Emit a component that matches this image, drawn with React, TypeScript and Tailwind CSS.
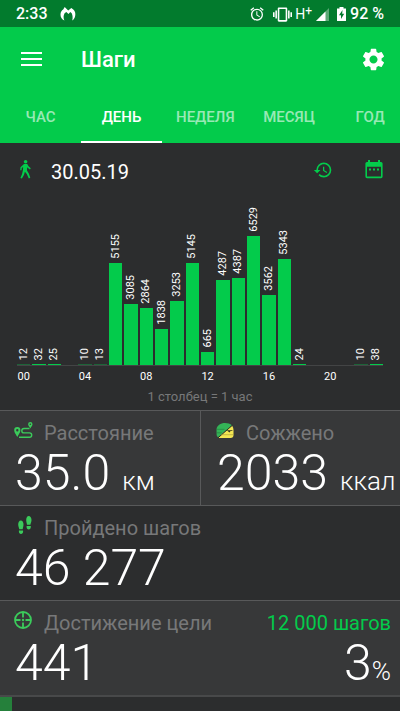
import type { ReactNode } from 'react';
import { MdAccessAlarm, MdHistory, MdSettings, MdVibration } from 'react-icons/md';

const TABS = ['ЧАС', 'ДЕНЬ', 'НЕДЕЛЯ', 'МЕСЯЦ', 'ГОД'];
const ACTIVE_TAB = 'ДЕНЬ';

const STEPS_PER_HOUR = [
  12, 32, 25, 0, 10, 13, 5155, 3085, 2864, 1838, 3253, 5145,
  665, 4287, 4387, 6529, 3562, 5343, 24, 0, 0, 0, 10, 38,
];
const STEPS_PER_PIXEL = 50.6;

function StatusBar() {
  return (
    <div className="flex h-[27px] items-center bg-[#027b2d] px-4 pt-px text-base font-medium">
      <span>2:33</span>
      <svg viewBox="0 0 16 14" className="ml-3 h-[14px] w-4 fill-white" aria-hidden="true">
        <path d="M4.700 0 8.200 3.600 11.300 1 13.300 2.400C15 4 15.700 6.200 15.200 8.700 14.900 10.600 13.800 12.500 12.200 13.600 12.900 11 12.700 8.600 11.700 6.200L10.300 5 8.500 6.900 6.300 5 4.600 6.200C3.300 8.600 3.300 11 4.400 13.600 1.800 12.200.3 10 .5 7.200.6 5.100 1.600 3.600 3.200 2.600Z" />
      </svg>
      <div className="ml-auto flex items-center">
        <MdAccessAlarm className="size-4" />
        <MdVibration className="ml-2 size-[19px]" />
        <span className="ml-[3px] text-sm leading-none font-normal">
          H<sup className="-top-1 text-[12px]">+</sup>
        </span>
        <svg viewBox="0 0 13 13" className="ml-1 size-[13px]" aria-hidden="true">
          <path d="M13 0V13H0Z" fill="#fff" fillOpacity=".35" />
          <path d="M9.5 3.5V13H0Z" fill="#fff" />
        </svg>
        <svg viewBox="0 0 9 14" className="ml-2 h-[14px] w-[9px]" aria-hidden="true">
          <path d="M2.500 0h4v1.500H9V14H0V1.500h2.500Z" fill="#fff" />
          <path d="M5.500 3 2 8.300h2v3.800L7.200 6.800h-2Z" fill="#027b2d" />
        </svg>
        <span className="ml-1">92 %</span>
      </div>
    </div>
  );
}

function Header() {
  return (
    <header className="bg-[#03cb4b]">
      <div className="flex h-16 items-center px-4">
        <button type="button" aria-label="Меню" className="flex w-[30px] justify-center">
          <svg viewBox="0 0 21 14" className="h-[14px] w-[21px] fill-white">
            <path d="M0 0h21v2H0zM0 6h21v2H0zM0 12h21v2H0z" />
          </svg>
        </button>
        <h1 className="ml-[35px] text-[22px] font-medium">Шаги</h1>
        <button type="button" aria-label="Настройки" className="ml-auto -mr-[3px]">
          <MdSettings className="size-[27px]" />
        </button>
      </div>
      <nav className="flex h-[52px] overflow-hidden">
        {TABS.map((tab) => (
          <button
            key={tab}
            type="button"
            className={
              tab === ACTIVE_TAB
                ? 'min-w-[81px] shrink-0 border-b-2 border-white px-[14px] pt-0.5 text-[15px] font-medium text-white'
                : 'min-w-[81px] shrink-0 border-b-2 border-transparent px-[14px] pt-0.5 text-[15px] font-medium text-white/60'
            }
          >
            {tab}
          </button>
        ))}
      </nav>
    </header>
  );
}

function DateRow() {
  return (
    <div className="flex h-[57px] items-center px-4 text-[#03cb4b]">
      <svg viewBox="0 0 11 19" className="mb-1 ml-1 h-[19px] w-[11px] fill-current" aria-hidden="true">
        <circle cx="5.600" cy="1.800" r="1.800" />
        <path d="M4 4h3.200l1.400 2.300 2.200 2-.9 1.100-2.300-1.700-.4-.6-.2 3.300 1.800 3.100 1.500 4.300-1.500.7-2-4.400-1.900-2.300-1 3.100-2 3.700-1.500-.7L2 14.200l1-4.400.1-2.800-1.300 1.100-.3 2.100H.2l.3-2.900Z" />
      </svg>
      <span className="ml-5 text-xl text-white">30.05.19</span>
      <button type="button" aria-label="История" className="mb-1 ml-auto">
        <MdHistory className="size-5" />
      </button>
      <button type="button" aria-label="Выбрать дату" className="mr-px mb-1 ml-8">
        <svg viewBox="0 0 18 19" className="h-[19px] w-[18px]">
          <path
            fill="currentColor"
            fillRule="evenodd"
            d="M3 0h2v2h8V0h2v2h1a1.600 1.600 0 0 1 1.600 1.600v13A1.600 1.600 0 0 1 16 18.200H2A1.600 1.600 0 0 1 .4 16.600v-13A1.600 1.600 0 0 1 2 2h1ZM2 6.700v9.800h14V6.700ZM4 8.500h2v2H4zM8 8.500h2v2H8zM12 8.500h2v2h-2z"
          />
        </svg>
      </button>
    </div>
  );
}

function StepsChart() {
  return (
    <figure className="px-[17px]">
      <div className="flex h-[166px] items-end gap-0.5 border-b border-[#434445]">
        {STEPS_PER_HOUR.map((steps, hour) => (
          <div key={hour} className="flex min-w-0 flex-1 flex-col items-center">
            {steps > 0 && (
              <>
                <span className="mb-1 rotate-180 text-[11px] leading-[14px] [writing-mode:vertical-rl]">
                  {steps}
                </span>
                <div
                  className={steps < 20 ? 'w-full bg-[#03cb4b]/35' : 'w-full bg-[#03cb4b]'}
                  style={{ height: Math.max(1, Math.round(steps / STEPS_PER_PIXEL)) }}
                />
              </>
            )}
          </div>
        ))}
      </div>
      <div className="mt-1 flex gap-0.5 text-[11px] leading-[14px]">
        {STEPS_PER_HOUR.map((_, hour) => (
          <span key={hour} className="flex min-w-0 flex-1 justify-center">
            {hour % 4 === 0 && String(hour).padStart(2, '0')}
          </span>
        ))}
      </div>
      <figcaption className="pt-1 pb-1 text-center text-[13px] leading-[18px] text-[#777879]">
        1 столбец = 1 час
      </figcaption>
    </figure>
  );
}

function RouteIcon() {
  return (
    <svg viewBox="0 0 19 17" className="h-[17px] w-[19px]" aria-hidden="true">
      <path
        d="M15.500 6.500H10a2.200 2.200 0 0 0 0 4.400h5.500a2.200 2.200 0 0 1 0 4.400H5"
        fill="none"
        stroke="#3bcb5b"
        strokeWidth="1.400"
      />
      <path
        fill="#3bcb5b"
        fillRule="evenodd"
        d="M3.300 5A3.100 3.100 0 0 1 6.400 8.200C6.400 10.500 4.500 12.500 3.300 15 2 12.500.2 10.500.2 8.200A3.100 3.100 0 0 1 3.300 5Zm0 2a1.200 1.200 0 1 0 0 2.400 1.200 1.200 0 0 0 0-2.400ZM16.300 0a2.200 2.200 0 0 1 2.200 2.200c0 1.600-1.400 2.600-2.200 4.200-.8-1.600-2.200-2.600-2.200-4.200A2.200 2.200 0 0 1 16.300 0Zm0 1.400a.8.8 0 1 0 0 1.600.8.8 0 0 0 0-1.600Z"
      />
    </svg>
  );
}

function BurgerIcon() {
  return (
    <svg viewBox="0 0 18 15" className="h-[15px] w-[18px]" aria-hidden="true">
      <path fill="#f3e653" d="M16 2.500C17 4 17.500 5.500 17.500 7v5a3 3 0 0 1-3 3H3l-1-1Z" />
      <path fill="#34b357" d="M.5 6.500C.8 2.500 4.500 0 9 0c2.800 0 5.300.8 6.900 2.300L2 14.200C1 13.500.6 12.500.6 11.500Z" />
      <path d="M.5 6.300h8M.8 9.800h5" stroke="#23783a" strokeWidth=".6" />
      <path d="M16.500 2.200 2 14.800" stroke="#26302a" strokeWidth="1" />
      <path d="M10.500 7.300h6.500l-1.200.8h-1.200l-1.200 1.300-1.400-1.200Z" fill="#33331d" />
      <path d="M5 11.700h12.500" stroke="#a49a35" strokeWidth=".6" />
    </svg>
  );
}

function FootstepsIcon() {
  return (
    <svg viewBox="0 0 14 18" className="ml-1 h-[18px] w-[14px] fill-[#3bcb5b]" aria-hidden="true">
      <path d="M2.800 4.500C4.600 4.500 5.500 6.300 5.500 8.500c0 2-.6 3-.8 4.700H1.300C1 11.500.2 10.500.2 8.500.2 6.300 1.200 4.500 2.800 4.500ZM.9 14.400h4.200v1.100c0 1.400-.8 2.500-2.100 2.500s-2.100-1.100-2.100-2.500Z" />
      <path d="M10.700 0c1.700 0 2.800 1.800 2.800 4 0 2-.8 3-1.100 4.700H9C8.800 7 8.200 6 8.200 4c0-2.200.9-4 2.500-4ZM8.600 9.900h4.200V11c0 1.400-.8 2.500-2.100 2.500S8.600 12.400 8.600 11Z" />
    </svg>
  );
}

function GoalIcon() {
  return (
    <svg viewBox="0 0 18 18" className="size-[18px]" aria-hidden="true">
      <g fill="none" stroke="#3bcb5b" strokeWidth="1.800">
        <circle cx="9" cy="9" r="8" />
        <path d="M9 1v5.500M9 11.500V17M1 9h5.500M11.500 9H17" />
      </g>
      <circle cx="9" cy="9" r="1.200" fill="#3bcb5b" />
    </svg>
  );
}

type StatProps = {
  icon: ReactNode;
  label: string;
  value: string;
  unit?: string;
  className: string;
  aside?: ReactNode;
};

function Stat({ icon, label, value, unit, className, aside }: StatProps) {
  return (
    <section className={`flex min-w-0 border-t border-[#58595a] pt-[10px] pb-2 ${className}`}>
      <div className="min-w-0 flex-1 whitespace-nowrap">
        <div className="flex h-6">
          <span className="flex h-[18px] w-[30px] shrink-0 items-center">{icon}</span>
          <h2 className="text-xl leading-6 text-[#777879]">{label}</h2>
        </div>
        <p className="mt-1 pl-px text-[50px] leading-[48px] font-light">
          {value}
          {unit && <span className="ml-3 text-[26px] leading-none">{unit}</span>}
        </p>
      </div>
      {aside}
    </section>
  );
}

export default function App() {
  return (
    <div className="min-h-screen overflow-hidden bg-[#2c2d2e] font-[Roboto,sans-serif] text-white">
      <StatusBar />
      <Header />
      <main>
        <DateRow />
        <StepsChart />
        <div className="grid grid-cols-2">
          <Stat
            icon={<RouteIcon />}
            label="Расстояние"
            value="35.0"
            unit="км"
            className="bg-[#373839] pl-[14px]"
          />
          <Stat
            icon={<BurgerIcon />}
            label="Сожжено"
            value="2033"
            unit="ккал"
            className="border-l bg-[#373839] pl-[15px]"
          />
        </div>
        <Stat icon={<FootstepsIcon />} label="Пройдено шагов" value="46 277" className="pl-[14px]" />
        <Stat
          icon={<GoalIcon />}
          label="Достижение цели"
          value="441"
          className="bg-[#373839] pl-[14px]"
          aside={
            <div className="pr-[9px] text-right whitespace-nowrap">
              <p className="text-xl leading-6 text-[#03cb4b]">12 000 шагов</p>
              <p className="mt-1 text-[50px] leading-[48px] font-light">
                3<span className="text-[26px] leading-none">%</span>
              </p>
            </div>
          }
        />
        <div className="border-t-2 border-[#48494a]">
          <div
            role="progressbar"
            aria-valuenow={3}
            aria-valuemin={0}
            aria-valuemax={100}
            aria-label="Достижение цели"
            className="h-[14px]"
          >
            <div className="h-full w-[3%] bg-[#25803b]" />
          </div>
        </div>
      </main>
    </div>
  );
}
